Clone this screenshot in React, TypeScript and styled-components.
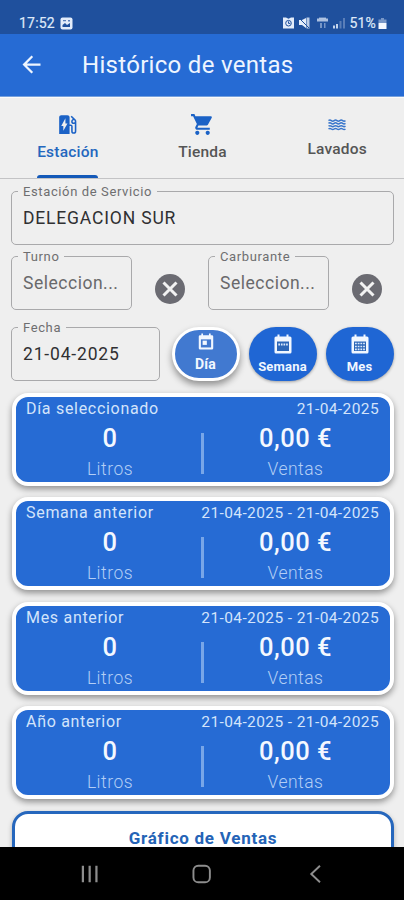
import React from "react";
import styled, { createGlobalStyle } from "styled-components";
import { MdEvStation, MdShoppingCart, MdArrowBack } from "react-icons/md";

const BLUE = "#266bd4";

const Global = createGlobalStyle`
  * { box-sizing: border-box; }
  body { margin: 0; background: #efefef; font-family: Roboto, sans-serif; overflow: hidden; }
`;

const Screen = styled.div`
  width: 404px;
  height: 900px;
  display: flex;
  flex-direction: column;
  background: #efefef;
  overflow: hidden;
`;

const StatusBar = styled.div`
  flex: none;
  height: 34px;
  padding: 12px 17px 0 19px;
  display: flex;
  align-items: center;
  justify-content: space-between;
  background: #1f509d;
  color: #dfe9f8;
  font-size: 14px;
  line-height: 22px;
`;

const StatusGroup = styled.div<{ $gap: number }>`
  display: flex;
  align-items: center;
  gap: ${(p) => p.$gap}px;
`;

const Clock = styled.span`
  letter-spacing: 0.2px;
  -webkit-text-stroke: 0.2px;
`;

const Header = styled.header`
  flex: none;
  height: 63px;
  padding: 0 22px 1px 18px;
  display: flex;
  align-items: center;
  gap: 37px;
  background: ${BLUE};
  border-bottom: 1px solid #75a0dd;
  color: #eef5ff;
`;

const Title = styled.h1`
  margin: 0;
  font-size: 24px;
  line-height: 30px;
  font-weight: 400;
  letter-spacing: 0.3px;
`;

const Tabs = styled.nav`
  flex: none;
  height: 82px;
  display: grid;
  grid-template-columns: repeat(3, 1fr);
  border-top: 1px solid #fafafa;
  border-bottom: 1px solid #c3c3c5;
`;

const Tab = styled.div<{ $active?: boolean; $top: number; $gap: number }>`
  display: flex;
  flex-direction: column;
  align-items: center;
  padding-top: ${(p) => p.$top}px;
  padding-left: 1px;
  gap: ${(p) => p.$gap}px;
  color: ${(p) => (p.$active ? "#2467be" : "#555")};
  font-size: 15.5px;
  line-height: 20px;
  font-weight: 500;
  letter-spacing: 0.2px;
  svg { color: #1b62c6; display: block; }
`;

const Indicator = styled.i`
  width: 61px;
  height: 3px;
  margin-top: auto;
  border-radius: 3px 3px 0 0;
  background: #1459b8;
`;

const Body = styled.main`
  flex: 1;
  min-height: 0;
  overflow: hidden;
  padding: 5px 10px 0 11px;
  display: flex;
  flex-direction: column;
`;

const Row = styled.div`
  flex: none;
  display: flex;
  align-items: flex-end;
`;

const FilterRow = styled(Row)`
  margin-top: 4px;
`;

const DateRow = styled(Row)`
  margin-top: 10px;
`;

const Field = styled.fieldset<{ $width: number }>`
  flex: none;
  width: ${(p) => p.$width}px;
  min-width: 0;
  height: 61px;
  margin: 0;
  padding: 8px 11px 0;
  border: 1px solid #a9a9ab;
  border-radius: 5px;
`;

const Legend = styled.legend`
  margin-left: -5px;
  padding: 0 5px;
  color: #6e6e70;
  font-size: 13px;
  line-height: 15px;
  letter-spacing: 0.62px;
`;

const Value = styled.div<{ $muted?: boolean }>`
  color: ${(p) => (p.$muted ? "#69696b" : "#303032")};
  font-size: 17.5px;
  line-height: 22px;
  letter-spacing: ${(p) => (p.$muted ? 0.52 : 0.83)}px;
  white-space: nowrap;
`;

const Clear = styled.button<{ $right: number }>`
  flex: none;
  width: 30px;
  height: 30px;
  margin: 0 ${(p) => p.$right}px 6px 23px;
  padding: 0;
  border: 0;
  border-radius: 50%;
  display: grid;
  place-items: center;
  background: #6b6b72;
`;

const Periods = styled.div`
  display: flex;
  align-items: center;
  margin-left: 11.5px;
  gap: 9px;
`;

const Period = styled.button<{ $selected?: boolean }>`
  width: 68px;
  height: 54px;
  margin: 0;
  padding: ${(p) => (p.$selected ? "3px 0 0" : "7px 0 0")};
  display: flex;
  flex-direction: column;
  align-items: center;
  gap: ${(p) => (p.$selected ? 6 : 4)}px;
  border-radius: 27px;
  border: ${(p) => (p.$selected ? "3px solid #fff" : "0")};
  background: ${(p) => (p.$selected ? "#4179d0" : "#1f66d4")};
  box-shadow: ${(p) => (p.$selected ? "0 4px 7px #0006" : "0 1px 3px #0005")};
  color: #f1f7ff;
  font: 700 ${(p) => (p.$selected ? 14 : 13)}px/17px Roboto, sans-serif;
  letter-spacing: 0.2px;
`;

const Cards = styled.div`
  flex: none;
  display: flex;
  flex-direction: column;
  gap: 11.6px;
  margin: 11.5px -1px 0 0;
  padding: 0 1px;
`;

const Card = styled.section`
  height: 93px;
  padding: 2px 11px 0 10px;
  border: 4px solid #fff;
  border-radius: 16px;
  background: ${BLUE};
  box-shadow: 0 3px 6px #0006;
  color: #d3e4fb;
`;

const CardTop = styled.div`
  display: flex;
  justify-content: space-between;
  font-size: 15.5px;
  line-height: 20px;
`;

const CardName = styled.span`
  font-size: 16px;
  letter-spacing: 0.7px;
`;

const CardDate = styled.span`
  letter-spacing: 0.4px;
`;

const Metrics = styled.div`
  display: grid;
  grid-template-columns: 1fr 3px 1fr;
  align-items: end;
`;

const Divider = styled.i`
  height: 41px;
  background: #78a6e8;
  margin: 0 0 10px;
`;

const Metric = styled.div<{ $right?: boolean }>`
  padding: ${(p) => (p.$right ? "2px 0 0 8px" : "2px 7px 0 0")};
  text-align: center;
`;

const Amount = styled.div`
  color: #f4f8ff;
  font-size: 25.5px;
  line-height: 34px;
  font-weight: 500;
  letter-spacing: 0.5px;
`;

const Unit = styled.div`
  color: #b3cef5;
  font-size: 17.5px;
  line-height: 29px;
  font-weight: 300;
  letter-spacing: 0.5px;
`;

const Chart = styled.section`
  flex: none;
  height: 80px;
  margin: 11.7px 0 0 1px;
  padding-top: 12px;
  border: 3px solid #2667bd;
  border-radius: 16px;
  background: #fff;
  box-shadow: 0 2px 5px #0004;
  color: #2463b6;
  text-align: center;
  font-size: 17px;
  line-height: 25px;
  font-weight: 700;
  letter-spacing: 0.75px;
`;

const NavBar = styled.footer`
  flex: none;
  height: 53px;
  display: flex;
  align-items: center;
  gap: 93px;
  padding: 0 80px;
  background: #000;
`;

const ImageIcon = () => (
  <svg width="13" height="13" viewBox="0 0 13 13">
    <rect x=".5" y=".5" width="12" height="12" rx="2" fill="#e3ecfa" />
    <path d="M2.500 10V8L5 6l2 2 3-2v4z" fill="#1f509d" />
    <path d="M3 3h3v1.300H3zM8 3h2v1.500H8z" fill="#1f509d" opacity=".7" />
  </svg>
);

const StatusIcons = () => (
  <svg width="64" height="14" viewBox="0 0 64 14">
    <g fill="#e3ecfa">
      <path d="M0 1.500h3l2.500 1.200L8 1.500h3v11H0z" />
      <path d="M16 4h3l4-2v10l-4-3h-3z" />
      <path d="M23.500 1.500h3v11h-3z" opacity=".8" />
      <path d="M34 2.500h11v3H34z" opacity=".72" />
      <path d="M36 1.500h7v1.500h-7z" opacity=".6" />
      <path d="M37 7h2v5h-2zM41 7h1.500v5H41z" opacity=".45" />
      <path d="M50 9.500h2v3h-2zM53 8h2v4.500h-2z" opacity=".85" />
      <path d="M56.500 5h2v7.500h-2zM60 2h2v10.500h-2z" opacity=".3" />
    </g>
    <circle cx="5.500" cy="7.200" r="2.800" fill="none" stroke="#1f509d" />
    <path d="M5.500 5.400v2h1.800M16 2l10 10" fill="none" stroke="#1f509d" />
  </svg>
);

const Battery = () => (
  <svg width="9" height="13" viewBox="0 0 9 13">
    <path d="M3 1h3v1.500h2.500V6h-8V2.500H3z" fill="#e3ecfa" opacity=".45" />
    <path d="M.5 6h8v6h-8z" fill="#f4f8ff" />
  </svg>
);

const WavesIcon = () => (
  <svg width="18" height="12" viewBox="0 0 18 12" fill="none" stroke="#3976cb" strokeWidth="1.500">
    {[1.6, 4.4, 7.2, 10].map((y) => (
      <path
        key={y}
        d={`M.5 ${y}q1.400-1.100 2.830 0t2.830 0t2.830 0t2.830 0t2.830 0t2.830 0`}
      />
    ))}
  </svg>
);

const CrossIcon = () => (
  <svg width="16" height="16" viewBox="0 0 16 16">
    <path d="m1.500 1.500 13 13M14.500 1.500l-13 13" stroke="#f2f2f2" strokeWidth="3" />
  </svg>
);

const CalendarIcon = ({ kind }: { kind: "day" | "week" | "month" }) => (
  <svg width={kind === "day" ? 16 : 18} height={kind === "day" ? 17 : 20} viewBox="0 0 18 20">
    <path d="M2 2.500h1.500V.5h2v2h7v-2h2v2H16q1.500 0 1.500 1.500v14q0 1.500-1.500 1.500H2Q.5 19.500.5 18V4Q.5 2.500 2 2.500z" fill="#f1f7ff" />
    <path d="M3 7.500h12V17H3z" fill={kind === "day" ? "#4179d0" : "#2b66b8"} />
    {kind === "day" && <path d="M5 9h5v5H5z" fill="#f1f7ff" />}
    {kind === "week" && <path d="M4.300 10.500h9.500" stroke="#dce9fb" strokeWidth="2" strokeDasharray="1.700 .9" />}
    {kind === "month" && (
      <path d="M4 9.500h10M4 12.500h10M4 15.300h10" stroke="#dce9fb" strokeWidth="1.700" strokeDasharray="1.800 .9" />
    )}
  </svg>
);

const RecentsIcon = () => (
  <svg width="20" height="20" viewBox="0 0 20 20">
    <path d="M3 1.500v17M10 1.500v17M17 1.500v17" stroke="#8d8d8d" strokeWidth="2.300" />
  </svg>
);

const HomeIcon = () => (
  <svg width="20" height="20" viewBox="0 0 20 20">
    <rect x="1.500" y="1.500" width="17" height="17" rx="5" fill="none" stroke="#8d8d8d" strokeWidth="2" />
  </svg>
);

const BackIcon = () => (
  <svg width="20" height="20" viewBox="0 0 20 20">
    <path d="m15.500 1.500-9 8.500 9 8.500" fill="none" stroke="#8d8d8d" strokeWidth="2" />
  </svg>
);

const range = "21-04-2025 - 21-04-2025";
const summaries = [
  { name: "Día seleccionado", date: "21-04-2025" },
  { name: "Semana anterior", date: range },
  { name: "Mes anterior", date: range },
  { name: "Año anterior", date: range },
];

export default function App() {
  return (
    <>
      <Global />
      <Screen>
        <StatusBar>
          <StatusGroup $gap={5}>
            <Clock>17:52</Clock>
            <ImageIcon />
          </StatusGroup>
          <StatusGroup $gap={2}>
            <StatusIcons />
            <Clock>51%</Clock>
            <Battery />
          </StatusGroup>
        </StatusBar>
        <Header>
          <MdArrowBack size={27} />
          <Title>Histórico de ventas</Title>
        </Header>
        <Tabs>
          <Tab $active $top={14} $gap={5}>
            <MdEvStation size={25} />
            Estación
            <Indicator />
          </Tab>
          <Tab $top={14} $gap={5}>
            <MdShoppingCart size={25} />
            Tienda
          </Tab>
          <Tab $top={21} $gap={8}>
            <WavesIcon />
            Lavados
          </Tab>
        </Tabs>
        <Body>
          <Row>
            <Field $width={383}>
              <Legend>Estación de Servicio</Legend>
              <Value>DELEGACION SUR</Value>
            </Field>
          </Row>
          <FilterRow>
            <Field $width={121}>
              <Legend>Turno</Legend>
              <Value $muted>Seleccion...</Value>
            </Field>
            <Clear $right={23} aria-label="Borrar turno"><CrossIcon /></Clear>
            <Field $width={121}>
              <Legend>Carburante</Legend>
              <Value $muted>Seleccion...</Value>
            </Field>
            <Clear $right={0} aria-label="Borrar carburante"><CrossIcon /></Clear>
          </FilterRow>
          <DateRow>
            <Field $width={149}>
              <Legend>Fecha</Legend>
              <Value>21-04-2025</Value>
            </Field>
            <Periods>
              <Period $selected><CalendarIcon kind="day" />Día</Period>
              <Period><CalendarIcon kind="week" />Semana</Period>
              <Period><CalendarIcon kind="month" />Mes</Period>
            </Periods>
          </DateRow>
          <Cards>
            {summaries.map((s) => (
              <Card key={s.name}>
                <CardTop>
                  <CardName>{s.name}</CardName>
                  <CardDate>{s.date}</CardDate>
                </CardTop>
                <Metrics>
                  <Metric>
                    <Amount>0</Amount>
                    <Unit>Litros</Unit>
                  </Metric>
                  <Divider />
                  <Metric $right>
                    <Amount>0,00 €</Amount>
                    <Unit>Ventas</Unit>
                  </Metric>
                </Metrics>
              </Card>
            ))}
          </Cards>
          <Chart>Gráfico de Ventas</Chart>
        </Body>
        <NavBar>
          <RecentsIcon />
          <HomeIcon />
          <BackIcon />
        </NavBar>
      </Screen>
    </>
  );
}
